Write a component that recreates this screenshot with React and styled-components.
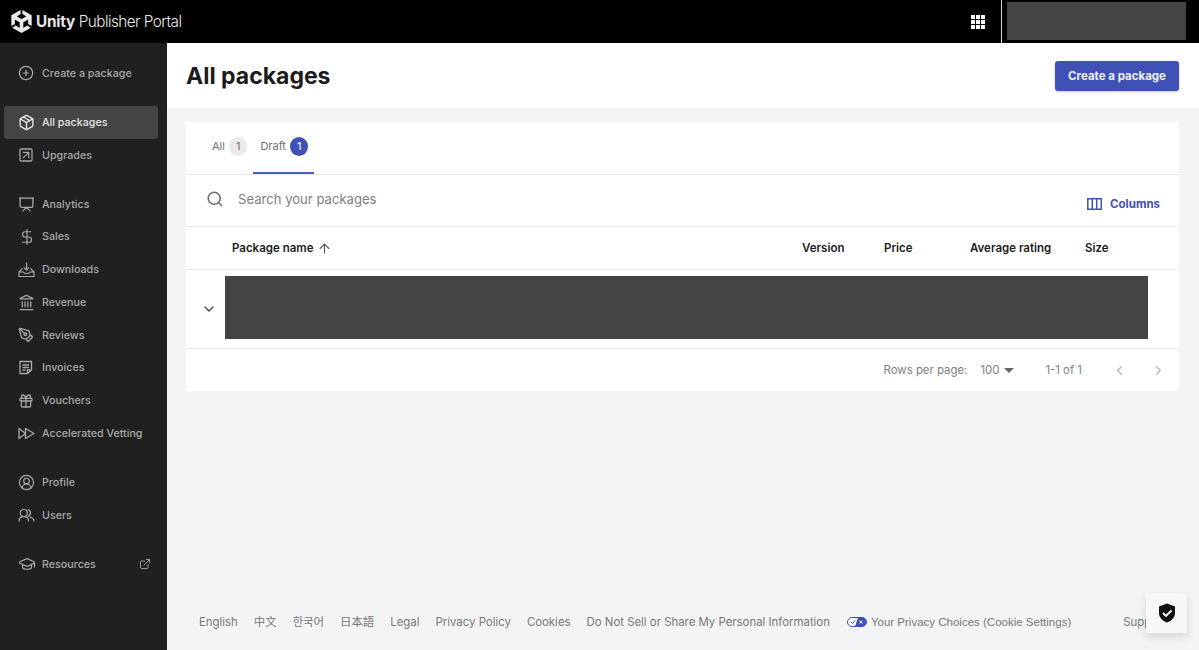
import React from 'react';
import styled, { createGlobalStyle } from 'styled-components';
import { SiUnity } from 'react-icons/si';
import {
  ArrowUp, ChevronDown, ChevronLeft, ChevronRight, CirclePlus, CircleUserRound,
  DollarSign, ExternalLink, Gift, GraduationCap, Landmark, Package, PenTool, Presentation,
  Search, SquareArrowUpRight
} from 'lucide-react';

const GlobalStyle = createGlobalStyle`
  html, body {
    margin: 0;
    height: 100%;
    overflow: hidden;
    background: #f3f4f6;
    font-family: Inter, "Noto Sans CJK SC", sans-serif;
  }
  * { box-sizing: border-box; }
`;

// icons lucide has no close match for
const DownloadTray = () => (
  <svg width="17" height="17" viewBox="0 0 17 17" fill="none" stroke="currentColor" strokeWidth="1.2">
    <path d="M8.5 1.5v7.5M5.8 6.4l2.7 2.7 2.7-2.7" />
    <path d="M4.5 7.5 1 11v4.5h15V11l-3.5-3.5M1 11h4.5l1 1.5h4l1-1.500H16" />
  </svg>
);

const InvoiceNote = () => (
  <svg width="15" height="15" viewBox="0 0 15 15" fill="none" stroke="currentColor" strokeWidth="1.3">
    <path d="M2 1.5h11.5v8.5l-4 3.5H2zM9.500 13.500V10h4M4.500 5h6.500M4.500 7.500h6.500M4.500 10h3" />
  </svg>
);

const FastForward = () => (
  <svg width="17" height="13" viewBox="0 0 17 13" fill="none" stroke="currentColor" strokeWidth="1.3">
    <path d="M1 1.500v10L7.500 6.500zM7.500 1.500v10L16 6.500z" strokeLinejoin="round" />
  </svg>
);

const TwoUsers = () => (
  <svg width="17" height="15" viewBox="0 0 17 15" fill="none" stroke="currentColor" strokeWidth="1.2">
    <circle cx="5.800" cy="5" r="3.500" />
    <path d="M1 13.500c0-3 2-4.800 4.800-4.800s4.800 1.800 4.800 4.800" />
    <path d="M9.800 1.600a3.500 3.500 0 0 1 0 6.800M11.500 9c2.700.4 4.500 2 4.500 4.500" />
  </svg>
);

const ColumnsIcon = () => (
  <svg width="15" height="12" viewBox="0 0 15 12" fill="none" stroke="currentColor" strokeWidth="1.500">
    <path d="M.8.8h13.400v10.400H.8zM5.300.8v10.400M9.700.8v10.400" />
  </svg>
);

const AppGrid = () => (
  <svg width="14" height="14" viewBox="0 0 14 14" fill="#fff">
    {[0, 5, 10].map(y =>
      [0, 5, 10].map(x => <rect key={x + '-' + y} x={x} y={y} width="4" height="4" />)
    )}
  </svg>
);

const PrivacyPill = () => (
  <svg width="20" height="10" viewBox="0 0 20 10">
    <rect x="0.5" y="0.5" width="19" height="9" rx="4.5" fill="#fff" stroke="#3f51b5" />
    <path d="M11 0.5h4a4.5 4.5 0 0 1 0 9H8z" fill="#3f51b5" />
    <path d="M4 5l1.5 1.5L8 3.5" fill="none" stroke="#3f51b5" />
    <path d="M12.5 3.5l3 3M15.5 3.5l-3 3" fill="none" stroke="#fff" />
  </svg>
);

const ShieldCheck = () => (
  <svg width="18" height="20" viewBox="0 0 18 20">
    <path d="M9 0.5 17 3.5V10c0 4.5-3.4 7.9-8 9.5C4.400 17.900 1 14.500 1 10V3.500z" fill="#111" />
    <path d="M5 10l3 3 5.500-5.500" fill="none" stroke="#fff" strokeWidth="1.800" />
  </svg>
);

const navGroups = [
  [{ label: 'Create a package', icon: <CirclePlus size={16} strokeWidth={1.8} /> }],
  [
    { label: 'All packages', icon: <Package size={17} strokeWidth={1.9} />, active: true },
    { label: 'Upgrades', icon: <SquareArrowUpRight size={16} strokeWidth={1.9} /> }
  ],
  [
    { label: 'Analytics', icon: <Presentation size={17} strokeWidth={1.8} /> },
    { label: 'Sales', icon: <DollarSign size={18} strokeWidth={1.6} /> },
    { label: 'Downloads', icon: <DownloadTray /> },
    { label: 'Revenue', icon: <Landmark size={17} strokeWidth={1.8} /> },
    { label: 'Reviews', icon: <PenTool size={16} strokeWidth={1.9} /> },
    { label: 'Invoices', icon: <InvoiceNote /> },
    { label: 'Vouchers', icon: <Gift size={16} strokeWidth={1.9} /> },
    { label: 'Accelerated Vetting', icon: <FastForward /> }
  ],
  [
    { label: 'Profile', icon: <CircleUserRound size={17} strokeWidth={1.7} /> },
    { label: 'Users', icon: <TwoUsers /> }
  ],
  [{ label: 'Resources', icon: <GraduationCap size={18} strokeWidth={1.6} />, external: true }]
];

const footerLinks = ['English', '中文', '한국어', '日本語', 'Legal', 'Privacy Policy', 'Cookies', 'Do Not Sell or Share My Personal Information'];

const App = () => (
  <Page>
    <GlobalStyle />
    <Header>
      <Logo>
        <SiUnity size={23} color="#e8e8e8" />
        <LogoText><b>Unity</b> Publisher Portal</LogoText>
      </Logo>
      <AppButton><AppGrid /></AppButton>
      <UserBox><Redacted /></UserBox>
    </Header>
    <Body>
      <SideBar>
        {navGroups.map((group, i) => (
          <NavGroup key={i}>
            {group.map(item => (
              <NavItem key={item.label} $active={item.active}>
                <NavIcon>{item.icon}</NavIcon>
                {item.label}
                {item.external && <NavExternal><ExternalLink size={12} strokeWidth={1.8} /></NavExternal>}
              </NavItem>
            ))}
          </NavGroup>
        ))}
      </SideBar>
      <Main>
        <TitleBar>
          <Title>All packages</Title>
          <PrimaryButton>Create a package</PrimaryButton>
        </TitleBar>
        <Card>
          <Tabs>
            <Tab>All<Badge>1</Badge></Tab>
            <Tab $active>Draft<Badge $active>1</Badge></Tab>
          </Tabs>
          <SearchRow>
            <SearchIcon><Search size={18} strokeWidth={2.1} /></SearchIcon>
            <SearchText>Search your packages</SearchText>
            <ColumnsButton><ColumnsIcon />Columns</ColumnsButton>
          </SearchRow>
          <TableHead>
            <span />
            <HeadCell>Package name<ArrowUp size={15} strokeWidth={1.8} /></HeadCell>
            <HeadCell>Version</HeadCell>
            <HeadCell>Price</HeadCell>
            <HeadCell>Average rating</HeadCell>
            <HeadCell>Size</HeadCell>
          </TableHead>
          <TableRow>
            <RowToggle><ChevronDown size={16} strokeWidth={2.3} /></RowToggle>
            <RowBar />
          </TableRow>
          <Pagination>
            Rows per page:
            <RowsValue>100<Caret /></RowsValue>
            <PageCount>1-1 of 1</PageCount>
            <PageArrow><ChevronLeft size={15} strokeWidth={2} /></PageArrow>
            <PageArrow><ChevronRight size={15} strokeWidth={2} /></PageArrow>
          </Pagination>
        </Card>
        <Footer>
          {footerLinks.map(link => <FooterLink key={link}>{link}</FooterLink>)}
          <PrivacyLink><PrivacyPill />Your Privacy Choices (Cookie Settings)</PrivacyLink>
          <SupportLink>Support</SupportLink>
        </Footer>
      </Main>
    </Body>
    <ShieldBadge><ShieldCheck /></ShieldBadge>
  </Page>
);

const Page = styled.div`
  height: 100vh;
  display: flex;
  flex-direction: column;
  overflow: hidden;
`;
const Header = styled.header`
  height: 43px;
  flex: none;
  background: #000;
  display: flex;
  align-items: center;
`;
const Logo = styled.div`
  display: flex;
  align-items: center;
  gap: 3.500px;
  margin-left: 9.500px;
  color: #e8e8e8;
`;
const LogoText = styled.span`
  font-size: 15.300px;
  letter-spacing: -0.55px;
  font-weight: 300;
  b { font-weight: 700; letter-spacing: -0.2px; }
`;
const AppButton = styled.div`
  margin-left: auto;
  margin-right: 16px;
  display: flex;
`;
const UserBox = styled.div`
  width: 198px;
  height: 43px;
  border-left: 1px solid #ddd;
  padding: 2px 13px 3px 5px;
  display: flex;
`;
const Redacted = styled.div`
  flex: 1;
  background: #444;
`;
const Body = styled.div`
  flex: 1;
  display: flex;
  min-height: 0;
`;
const SideBar = styled.nav`
  width: 167px;
  flex: none;
  background: #202020;
  padding: 14px 9px 0 4px;
  display: flex;
  flex-direction: column;
  gap: 16.25px;
`;
const NavGroup = styled.div`
  display: flex;
  flex-direction: column;
`;
const NavItem = styled.div`
  height: 32.750px;
  display: flex;
  align-items: center;
  padding-left: 14px;
  font-size: 10.700px;
  font-weight: 500;
  border-radius: 3px;
  color: ${p => (p.$active ? '#e6e6e6' : '#a8a8a8')};
  background: ${p => (p.$active ? '#444' : 'transparent')};
`;
const NavIcon = styled.span`
  width: 24px;
  display: flex;
  align-items: center;
`;
const NavExternal = styled.span`
  margin-left: auto;
  margin-right: 7px;
  display: flex;
`;
const Main = styled.main`
  flex: 1;
  min-width: 0;
  display: flex;
  flex-direction: column;
`;
const TitleBar = styled.div`
  height: 65px;
  flex: none;
  background: #fff;
  display: flex;
  align-items: center;
  justify-content: space-between;
  padding: 0 20px 0 19px;
`;
const Title = styled.h1`
  margin: 0;
  font-size: 23px;
  font-weight: 700;
  color: #1c1c1c;
`;
const PrimaryButton = styled.button`
  width: 124px;
  height: 30px;
  border: 0;
  border-radius: 3px;
  background: #3f51b5;
  color: #f2f3fb;
  font-family: inherit;
  font-size: 11.500px;
  font-weight: 700;
  box-shadow: 0 1px 3px rgba(0, 0, 0, 0.2);
`;
const Card = styled.section`
  margin: 14px 20px 0 19px;
  background: #fff;
`;
const Tabs = styled.div`
  height: 53px;
  display: flex;
  padding-left: 19px;
  border-bottom: 1px solid #e6e6e6;
`;
const Tab = styled.div`
  height: 52px;
  padding: 0 6px 2px 7px;
  display: flex;
  align-items: center;
  gap: 4px;
  font-size: 11px;
  color: #707070;
  border-bottom: 2px solid ${p => (p.$active ? '#4f5fc0' : 'transparent')};
`;
const Badge = styled.span`
  width: 18.500px;
  height: 19px;
  border-radius: 50%;
  display: flex;
  align-items: center;
  justify-content: center;
  font-size: 11px;
  background: ${p => (p.$active ? '#3f51b5' : '#e9e9e9')};
  color: ${p => (p.$active ? '#fff' : '#707070')};
`;
const SearchRow = styled.div`
  height: 52px;
  display: flex;
  align-items: center;
  padding: 0 19px 4px 20px;
  border-bottom: 1px solid #e6e6e6;
`;
const SearchIcon = styled.span`
  display: flex;
  color: #6f6f6f;
  margin-right: 14px;
`;
const SearchText = styled.span`
  font-size: 13.100px;
  color: #808080;
`;
const ColumnsButton = styled.span`
  margin-left: auto;
  margin-top: 11px;
  display: flex;
  align-items: center;
  gap: 8px;
  font-size: 11.500px;
  font-weight: 700;
  color: #3f51b5;
`;
const TableHead = styled.div`
  height: 43px;
  display: grid;
  grid-template-columns: 46px 570px 82px 86px 115px 94px;
  align-items: center;
  border-bottom: 1px solid #e6e6e6;
`;
const HeadCell = styled.span`
  display: flex;
  align-items: center;
  gap: 4px;
  font-size: 11.500px;
  font-weight: 600;
  color: #1c1c1c;
  white-space: pre;
  svg { color: #555; }
`;
const TableRow = styled.div`
  height: 79px;
  display: flex;
  align-items: center;
  padding: 0 31px 4px 15px;
  border-bottom: 1px solid #e6e6e6;
`;
const RowToggle = styled.span`
  width: 24px;
  display: flex;
  color: #555;
  margin-top: 4px;
`;
const RowBar = styled.div`
  flex: 1;
  height: 63px;
  background: #444;
`;
const Pagination = styled.div`
  height: 42px;
  display: flex;
  align-items: center;
  justify-content: flex-end;
  padding-right: 1.500px;
  font-size: 11.400px;
  color: #808080;
`;
const RowsValue = styled.span`
  display: flex;
  align-items: center;
  gap: 5px;
  margin-left: 13px;
`;
const Caret = styled.span`
  width: 0;
  height: 0;
  border-left: 5px solid transparent;
  border-right: 5px solid transparent;
  border-top: 5px solid #666;
`;
const PageCount = styled.span`
  margin-left: 31px;
  margin-right: 17.500px;
`;
const PageArrow = styled.span`
  width: 39px;
  display: flex;
  justify-content: center;
  color: #b5b5b5;
`;
const Footer = styled.footer`
  margin-top: auto;
  height: 58px;
  flex: none;
  display: flex;
  align-items: flex-start;
  gap: 16px;
  padding: 22.500px 0 0 32px;
  white-space: nowrap;
  overflow: hidden;
  font-size: 11.400px;
  color: #777;
`;
const FooterLink = styled.span`
  line-height: 15px;
`;
const PrivacyLink = styled.span`
  display: flex;
  align-items: center;
  gap: 4px;
  margin-left: 1px;
  line-height: 15px;
  font-size: 11.500px;
  font-family: "Liberation Sans", sans-serif;
`;
const SupportLink = styled.span`
  margin-left: 36px;
  line-height: 15px;
`;
const ShieldBadge = styled.div`
  position: fixed;
  right: 12px;
  bottom: 17px;
  width: 41px;
  height: 40px;
  background: #f7f7f7;
  display: flex;
  align-items: center;
  justify-content: center;
  box-shadow: 0 4px 8px rgba(0, 0, 0, 0.12);
`;

export default App;
